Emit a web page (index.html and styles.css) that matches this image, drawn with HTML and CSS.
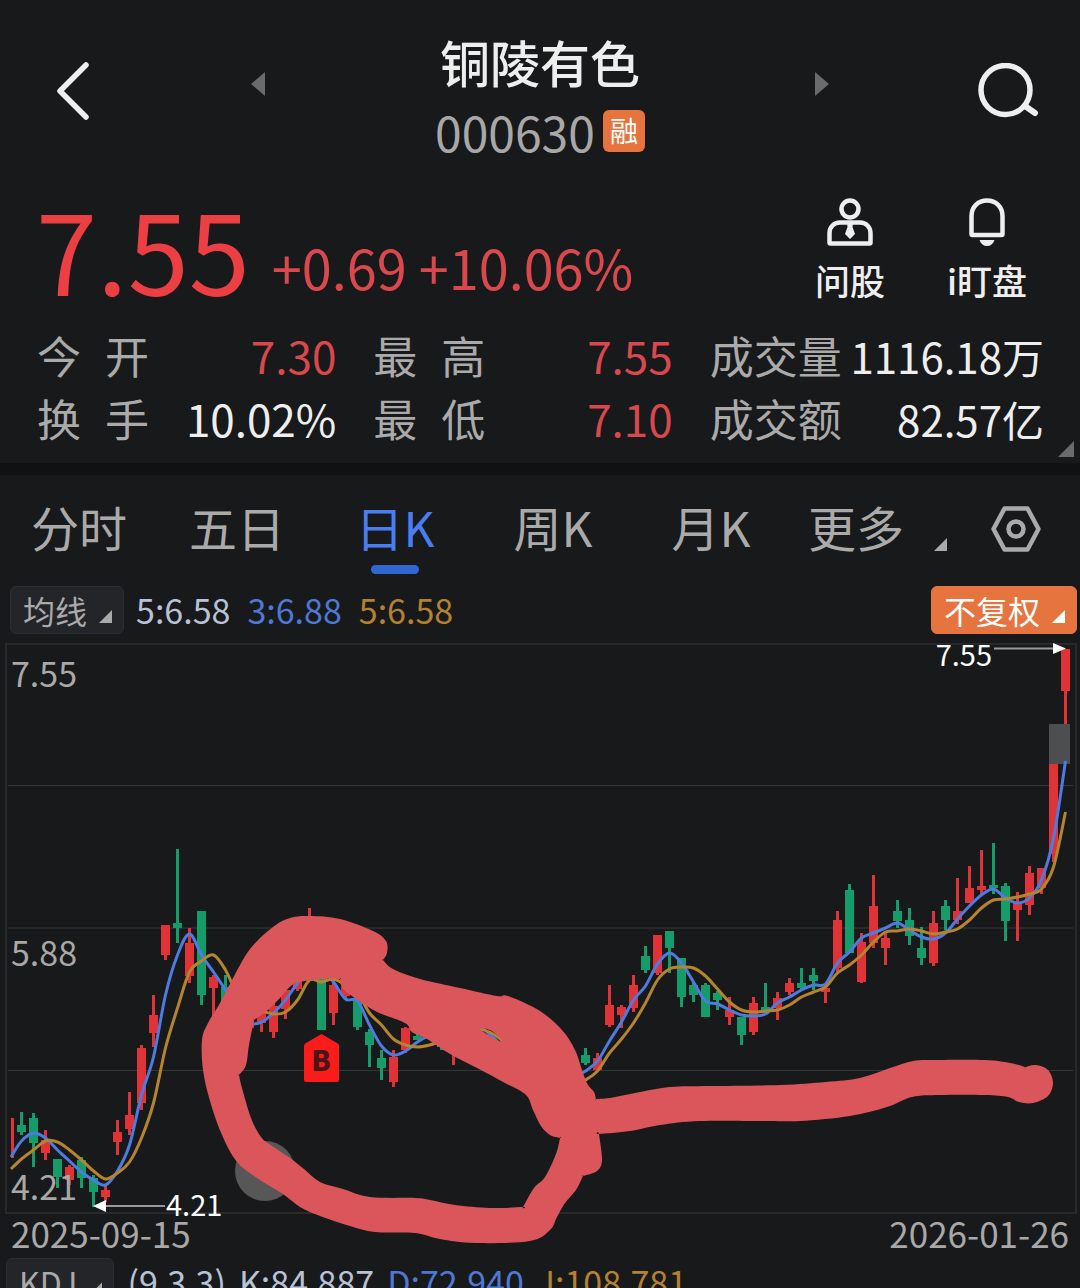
FILE: index.html
```html
<!DOCTYPE html>
<html lang="zh-CN">
<head>
    <meta charset="UTF-8">
    <meta name="viewport" content="width=device-width, initial-scale=1.0">
    <title>铜陵有色 000630</title>
    <link rel="stylesheet" href="styles.css">
</head>
<body>
    <header class="header">
        <button class="icon-btn back-btn" aria-label="返回">
            <svg width="34" height="58" viewBox="0 0 34 58"><path d="M30 3L4 29L30 55" fill="none" stroke="#eee" stroke-width="5.5" stroke-linecap="round" stroke-linejoin="round"/></svg>
        </button>
        <div class="stock-nav">
            <button class="icon-btn arrow-btn" aria-label="上一只">
                <svg width="14" height="24" viewBox="0 0 14 24"><path d="M0 12L14 0V24Z" fill="#6b6b6b"/></svg>
            </button>
            <div class="stock-title">
                <h1>铜陵有色</h1>
                <p class="stock-code">000630<span class="tag">融</span></p>
            </div>
            <button class="icon-btn arrow-btn" aria-label="下一只">
                <svg width="14" height="24" viewBox="0 0 14 24"><path d="M14 12L0 0V24Z" fill="#6b6b6b"/></svg>
            </button>
        </div>
        <button class="icon-btn search-btn" aria-label="搜索">
            <svg width="62" height="56" viewBox="0 0 62 56"><circle cx="27.500" cy="27" r="24.5" fill="none" stroke="#eee" stroke-width="5.5"/><path d="M47 43L57 50" stroke="#eee" stroke-width="6" stroke-linecap="round"/></svg>
        </button>
    </header>

    <main>
        <section class="quote">
            <span class="price">7.55</span>
            <span class="change">+0.69 +10.06%</span>
            <button class="action">
                <svg width="46" height="48" viewBox="0 0 46 48" fill="none" stroke="#eee" stroke-width="4.5">
                    <circle cx="23" cy="11" r="8.5"/>
                    <path d="M2.5 44.500V35C2.500 29 7 24.500 13 24.500H33C39 24.500 43.500 29 43.500 35V44.500Q43.500 45.500 42.500 45.500H3.500Q2.500 45.500 2.500 44.500Z"/>
                    <path d="M20 25H26L25.500 29L28 36L23 41L18 36L20.500 29Z" fill="#eee" stroke="none"/>
                </svg>
                问股
            </button>
            <button class="action">
                <svg width="38" height="48" viewBox="0 0 38 48">
                    <path d="M3.500 36V18C3.500 9 10 2.500 19 2.500S34.500 9 34.500 18V36Q34.500 37 33.500 37H4.500Q3.500 37 3.500 36Z" fill="none" stroke="#eee" stroke-width="4.5"/>
                    <path d="M11.500 42H26.500C25 46 22.500 48 19 48S13 46 11.500 42Z" fill="#eee"/>
                </svg>
                i盯盘
            </button>
        </section>

        <dl class="stats">
            <div class="stat"><dt>今 开</dt><dd class="up">7.30</dd></div>
            <div class="stat"><dt>最 高</dt><dd class="up">7.55</dd></div>
            <div class="stat"><dt class="wide">成交量</dt><dd>1116.18万</dd></div>
            <div class="stat"><dt>换 手</dt><dd>10.02%</dd></div>
            <div class="stat"><dt>最 低</dt><dd class="up">7.10</dd></div>
            <div class="stat"><dt class="wide">成交额</dt><dd>82.57亿</dd></div>
        </dl>

        <nav class="tabs">
            <button class="tab">分时</button>
            <button class="tab">五日</button>
            <button class="tab active">日K</button>
            <button class="tab">周K</button>
            <button class="tab">月K</button>
            <button class="tab more">更多<i class="corner"></i></button>
            <button class="icon-btn settings-btn" aria-label="设置">
                <svg width="50" height="46" viewBox="0 0 50 46" fill="none" stroke="#aaa" stroke-width="4.5" stroke-linejoin="round"><path d="M13.500 2.500H36.500L47.500 23L36.500 43.500H13.500L2.500 23Z"/><circle cx="25" cy="23" r="7.5"/></svg>
            </button>
        </nav>

        <div class="indicator-row">
            <button class="picker">均线<i class="corner"></i></button>
            <span class="val-white">5:6.58</span>
            <span class="val-blue">3:6.88</span>
            <span class="val-gold">5:6.58</span>
            <button class="picker adjust">不复权<i class="corner"></i></button>
        </div>

        <svg class="chart" viewBox="0 640 1080 573">
            <rect x="6" y="644" width="1070" height="569" fill="none" stroke="#28292b" stroke-width="2"/>
            <path d="M8 785.500H1073M8 1070.500H1073" stroke="#353637"/>
            <path d="M8 928H1073" stroke="#28292b" stroke-width="2"/>
            <circle cx="265" cy="1171" r="30" fill="#575757"/>
            <g id="candles"></g>
            <rect x="1049" y="724" width="21" height="40" fill="#4d4e50"/>
            <path id="ma3" class="ma" stroke="#4e7be0"/>
            <path id="ma5" class="ma" stroke="#b5842f"/>

            <g class="axis-label">
                <text x="11" y="687">7.55</text>
                <text x="11" y="966">5.88</text>
                <text x="11" y="1200">4.21</text>
            </g>
            <path d="M994 648.500H1053M106 1206H165" stroke="#999" stroke-width="2"/>
            <path d="M1053 643L1066 648.500L1053 654ZM106 1200L93 1206L106 1212Z" fill="#fff"/>
            <g class="mark-label">
                <text x="992" y="666" text-anchor="end">7.55</text>
                <text x="166" y="1216">4.21</text>
            </g>

            <path d="M304 1046Q304 1044 306 1043L321.500 1034L337 1043Q339 1044 339 1046V1080Q339 1082 337 1082H306Q304 1082 304 1080Z" fill="#fa1b1b"/>
            <text class="buy-mark" x="321" y="1071" text-anchor="middle">B</text>
            <path id="brush" fill="#da565b" fill-rule="evenodd"/>
        </svg>

        <div class="dates"><span>2025-09-15</span><span>2026-01-26</span></div>

        <div class="indicator-row kdj-row">
            <button class="picker">KDJ<i class="corner"></i></button>
            <span class="val-white">(9,3,3)</span>
            <span class="val-white">K:84.887</span>
            <span class="val-blue">D:72.940</span>
            <span class="val-gold">J:108.781</span>
        </div>
    </main>
    <script src="chart.js"></script>
</body>
</html>
```

FILE: styles.css
```css
* {
    box-sizing: border-box;
}

body {
    margin: 0;
    height: 100vh;
    overflow: hidden;
    background-color: #18191b;
    color: #eee;
    font-family: "Noto Sans CJK SC", "Noto Sans", sans-serif;
}

button {
    padding: 0;
    border: none;
    background: none;
    color: inherit;
    font-family: inherit;
    cursor: pointer;
}

svg {
    display: block;
}

h1, p, dl, dd {
    margin: 0;
}

/* header */
.header {
    display: grid;
    grid-template-columns: 23% 54% 23%;
    align-items: center;
    height: 182px;
}

.back-btn {
    justify-self: start;
    margin-left: 56px;
}

.search-btn {
    justify-self: end;
    margin-right: 40px;
}

.stock-nav {
    display: flex;
    justify-content: space-between;
    align-items: center;
    padding: 0 3px;
}

.arrow-btn {
    margin-bottom: 14px;
}

.stock-title {
    display: flex;
    flex-direction: column;
    align-items: center;
    gap: 10px;
    padding-top: 10px;
}

h1 {
    font-size: 50px;
    line-height: 60px;
    font-weight: 500;
}

.stock-code {
    display: flex;
    align-items: center;
    gap: 8px;
    font-size: 48px;
    line-height: 60px;
    color: #a8a8a8;
}

.tag {
    width: 42px;
    height: 42px;
    border-radius: 6px;
    background-color: #e6743e;
    color: #fff;
    font-size: 28px;
    line-height: 40px;
    text-align: center;
}

/* quote */
.quote {
    display: flex;
    align-items: flex-end;
    padding: 10px 47px 0 36px;
}

.price {
    font-size: 110px;
    line-height: 112px;
    color: #eb3f43;
}

.change {
    margin: 0 auto 10px 22px;
    font-size: 54px;
    line-height: 54px;
    color: #d9484c;
}

.action {
    display: flex;
    flex-direction: column;
    align-items: center;
    gap: 14px;
    width: 92px;
    margin: 0 0 4px 45px;
    font-size: 35px;
    line-height: 40px;
    font-weight: 500;
}

.stats {
    position: relative;
    display: grid;
    grid-template-columns: 299fr 299fr 334fr;
    column-gap: 37px;
    padding: 20px 36px 13px 37px;
    border-bottom: 12px solid #101113;
}

.stats::after {
    content: "";
    position: absolute;
    right: 6px;
    bottom: 6px;
    width: 16px;
    height: 16px;
    background-color: #6b6b6b;
    clip-path: polygon(100% 0, 100% 100%, 0 100%);
}

.stat {
    display: flex;
    justify-content: space-between;
    align-items: baseline;
    font-size: 44px;
    line-height: 63px;
    white-space: nowrap;
}

.stat dt {
    width: 112px;
    color: #aaa;
    text-align-last: justify;
}

.stat .wide {
    width: auto;
}

.stat .wide + dd {
    font-size: 42px;
}

.stat .up {
    color: #d9484c;
}

/* period tabs */
.tabs {
    display: grid;
    grid-template-columns: repeat(5, 158fr) 175fr 115fr;
    height: 111px;
    padding-top: 21px;
}

.tab {
    display: flex;
    flex-direction: column;
    align-items: center;
    gap: 9px;
    font-size: 48px;
    line-height: 60px;
    color: #aaa;
}

.tab.active {
    color: #4a7df0;
}

.tab.active::after {
    content: "";
    width: 48px;
    height: 9px;
    border-radius: 5px;
    background-color: #3166d0;
}

.tab.more {
    flex-direction: row;
    align-items: flex-start;
    justify-content: center;
    gap: 30px;
}

.settings-btn {
    justify-self: end;
    align-self: start;
    margin: 10px 39px 0 0;
}

.corner {
    width: 13px;
    height: 13px;
    background-color: currentColor;
    clip-path: polygon(100% 0, 100% 100%, 0 100%);
}

.tab .corner {
    margin-top: 42px;
}

/* indicator values */
.indicator-row {
    display: flex;
    align-items: center;
    gap: 17px;
    padding: 0 3px 0 10px;
    margin-bottom: 6px;
    font-size: 34px;
    line-height: 48px;
    white-space: nowrap;
}

.picker {
    display: flex;
    align-items: flex-end;
    gap: 12px;
    height: 48px;
    padding: 0 11px 0 12px;
    margin-right: -5px;
    border: 1px solid #2c2d30;
    border-radius: 6px;
    background-color: #242529;
    color: #aaa;
    font-size: 32px;
    line-height: 46px;
}

.picker .corner {
    margin-bottom: 10px;
}

.adjust {
    margin: 0 0 0 auto;
    border-color: #e6743e;
    background-color: #e6743e;
    color: #fff;
}

.val-white {
    color: #b8c2d6;
}

.val-blue {
    color: #4e78d4;
}

.val-gold {
    color: #b5812f;
}

/* chart */
.chart {
    position: relative;
    width: 100%;
    overflow: visible;
}

.ma {
    fill: none;
    stroke-width: 3;
    stroke-linejoin: round;
}

.axis-label {
    fill: #a8a8a8;
    font-size: 34px;
}

.mark-label {
    fill: #fff;
    font-size: 29px;
}

.buy-mark {
    fill: #4a1519;
    font-size: 28px;
    font-weight: 900;
}

.dates {
    display: flex;
    justify-content: space-between;
    padding: 0 11px;
    font-size: 35px;
    line-height: 40px;
    color: #a8a8a8;
}

.kdj-row {
    gap: 13px;
    margin-top: 5px;
    padding-left: 6px;
}

.kdj-row .picker {
    margin-right: 0;
}
```

FILE: chart.js
```js
const UP = '#df3338';
const DOWN = '#169c6a';
const STEP = 12;
const FIRST_X = 9.5;

// index: [direction, high, body top, body bottom, low]
const candles = {
    1: ['d', 1112, 1125, 1132, 1135], 2: ['d', 1113, 1118, 1143, 1167],
    3: ['u', 1130, 1140, 1153, 1160], 4: ['d', 1159, 1159, 1177, 1188],
    5: ['u', 1165, 1167, 1180, 1185], 6: ['d', 1157, 1160, 1178, 1188],
    7: ['d', 1175, 1178, 1192, 1207], 8: ['u', 1185, 1190, 1197, 1202],
    9: ['u', 1120, 1132, 1142, 1155], 10: ['u', 1092, 1115, 1129, 1135],
    11: ['u', 1045, 1048, 1103, 1110], 12: ['u', 995, 1015, 1033, 1047],
    13: ['u', 925, 925, 955, 960], 14: ['d', 849, 923, 928, 943],
    15: ['u', 928, 943, 976, 983], 16: ['d', 911, 911, 995, 1005],
    17: ['u', 975, 977, 988, 1017], 18: ['d', 975, 987, 1002, 1010],
    20: ['u', 1010, 1012, 1028, 1031], 21: ['u', 1005, 1012, 1023, 1032],
    22: ['u', 1003, 1006, 1032, 1038], 23: ['u', 985, 990, 1009, 1019],
    24: ['u', 975, 978, 989, 991], 25: ['u', 908, 940, 970, 975],
    26: ['d', 978, 978, 1030, 1030], 27: ['u', 980, 985, 1013, 1025],
    28: ['u', 980, 987, 996, 999], 29: ['d', 995, 998, 1027, 1030],
    30: ['d', 1029, 1032, 1045, 1067], 31: ['d', 1050, 1058, 1068, 1080],
    32: ['u', 1050, 1057, 1082, 1087], 33: ['u', 1027, 1028, 1050, 1053],
    34: ['d', 1030, 1036, 1040, 1040], 36: ['d', 1035, 1043, 1047, 1050],
    37: ['u', 1030, 1035, 1045, 1065],
    48: ['d', 1048, 1055, 1063, 1065], 49: ['u', 1053, 1058, 1070, 1070],
    50: ['u', 985, 1005, 1025, 1027], 51: ['u', 1005, 1007, 1015, 1028],
    52: ['u', 975, 985, 1008, 1012], 53: ['d', 946, 956, 970, 973],
    54: ['u', 935, 935, 973, 975], 55: ['d', 931, 931, 948, 973],
    56: ['d', 958, 958, 997, 1007], 57: ['d', 983, 985, 995, 1002],
    58: ['d', 983, 985, 1017, 1017], 59: ['d', 991, 993, 1000, 1010],
    60: ['u', 997, 1010, 1017, 1025], 61: ['d', 1017, 1017, 1035, 1045],
    62: ['u', 997, 1003, 1032, 1035], 63: ['d', 983, 1007, 1010, 1013],
    64: ['u', 992, 998, 1008, 1020], 65: ['u', 978, 983, 992, 995],
    66: ['d', 968, 983, 988, 991], 67: ['d', 968, 975, 981, 990],
    68: ['u', 987, 988, 992, 1003], 69: ['u', 911, 920, 968, 972],
    70: ['d', 884, 890, 953, 953], 71: ['u', 933, 942, 982, 983],
    72: ['u', 875, 906, 943, 948], 73: ['u', 933, 938, 948, 965],
    74: ['d', 900, 911, 921, 928], 75: ['d', 908, 920, 936, 945],
    76: ['d', 927, 948, 958, 965], 77: ['u', 911, 923, 963, 966],
    78: ['d', 900, 906, 920, 930], 79: ['u', 878, 911, 920, 924],
    80: ['u', 866, 888, 903, 903], 81: ['u', 850, 886, 890, 895],
    82: ['d', 843, 885, 888, 894], 83: ['d', 883, 886, 921, 941],
    84: ['u', 892, 902, 910, 941], 85: ['u', 866, 873, 905, 915],
    86: ['u', 868, 868, 888, 894], 87: ['u', 764, 764, 854, 862],
    88: ['u', 649, 649, 691, 724]
};

// moving averages, one y per candle
const ma3 = [
    1157, 1141, 1133, 1138, 1150, 1161, 1172, 1180, 1185, 1171, 1145, 1095, 1057, 995, 955, 934,
    955, 972, 990, 1010, 1023, 1022, 1013, 1000, 983, 970, 968, 982, 999, 1001, 1025, 1046,
    1055, 1051, 1042, 1035, 1028, 1024, 1022, 1025, 1034, 1046, 1060, 1075, 1085, 1088, 1083, 1078,
    1071, 1061, 1041, 1022, 1000, 986, 964, 953, 963, 982, 1001, 1004, 1010, 1015, 1016, 1014,
    1003, 997, 990, 985, 984, 963, 952, 938, 933, 928, 923, 930, 937, 939, 933, 919,
    906, 895, 889, 898, 903, 898, 880, 838, 761
];
const ma5 = [
    1169, 1159, 1150, 1141, 1142, 1150, 1160, 1171, 1179, 1173, 1162, 1138, 1103, 1048, 1008, 972,
    961, 955, 970, 995, 1008, 1011, 1014, 1012, 1000, 980, 982, 979, 985, 993, 1013, 1025,
    1039, 1045, 1047, 1045, 1041, 1036, 1031, 1029, 1032, 1040, 1052, 1066, 1078, 1088, 1090, 1086,
    1080, 1071, 1053, 1039, 1023, 1003, 980, 969, 967, 968, 976, 989, 1002, 1010, 1012, 1011,
    1010, 1005, 997, 992, 987, 973, 965, 955, 942, 932, 931, 929, 931, 934, 932, 929,
    920, 908, 900, 899, 897, 894, 889, 867, 812
];

// a point given twice makes a sharp corner
const brushOuter = [
    [309, 916], [340, 919], [373, 931], [386, 941], [387, 953], [383, 960], [383, 960], [393, 969], [420, 979],
    [460, 988], [497, 996], [508, 996], [540, 1011], [562, 1030], [575, 1050], [583, 1073], [588, 1085],
    [594, 1092], [596, 1099], [596, 1099], [610, 1098], [635, 1093], [670, 1087], [710, 1086], [780, 1085], [826, 1082], [860, 1078],
    [890, 1068], [913, 1061], [935, 1060], [985, 1060], [1010, 1063], [1025, 1067], [1025, 1067], [1036, 1065],
    [1048, 1070], [1053, 1083], [1048, 1096], [1033, 1103], [1019, 1102], [1008, 1097], [985, 1095],
    [940, 1095], [912, 1097], [887, 1107], [850, 1116], [800, 1121], [765, 1121], [700, 1121],
    [660, 1125], [630, 1131], [599, 1134], [599, 1134], [602, 1160], [597, 1171], [583, 1176], [583, 1176], [576, 1190], [565, 1203],
    [557, 1217], [550, 1230], [530, 1241], [475, 1243], [440, 1239], [415, 1233], [375, 1232],
    [350, 1226], [320, 1216], [300, 1207], [283, 1194], [260, 1180], [237, 1162], [222, 1135],
    [210, 1101], [203, 1070], [202, 1040], [208, 1023], [220, 1003], [232, 980], [250, 949],
    [273, 927], [290, 918]
];
const brushInner = [
    [340, 979], [340, 979], [343, 989], [358, 1000], [377, 1012], [405, 1023], [412, 1032], [427, 1039],
    [450, 1054], [477, 1068], [505, 1083], [526, 1095], [533, 1110], [541, 1126], [550, 1135], [560, 1138],
    [560, 1138], [556, 1154], [545, 1177], [534, 1188], [523, 1207], [523, 1207], [490, 1208], [455, 1205], [430, 1200],
    [415, 1198], [370, 1197], [343, 1189], [320, 1182], [304, 1169], [290, 1158], [272, 1146],
    [261, 1137], [251, 1118], [242, 1088], [239, 1075], [239, 1075], [246, 1065], [249, 1045], [254, 1020],
    [254, 1020], [268, 1010], [280, 998], [292, 985], [305, 981], [325, 979]
];
const brushGap = [[479, 1028], [490, 1030], [498, 1036], [502, 1042], [490, 1036]];

// Catmull-Rom spline as a cubic bezier path
function smooth(points, closed) {
    const n = points.length;
    const at = i => closed ? points[(i + n) % n] : points[Math.max(0, Math.min(n - 1, i))];
    let d = 'M' + points[0];
    for (let i = 0; i < (closed ? n : n - 1); i++) {
        const [a, b, c, e] = [at(i - 1), at(i), at(i + 1), at(i + 2)];
        d += `C${b[0] + (c[0] - a[0]) / 6},${b[1] + (c[1] - a[1]) / 6} `
            + `${c[0] - (e[0] - b[0]) / 6},${c[1] - (e[1] - b[1]) / 6} ${c}`;
    }
    return closed ? d + 'Z' : d;
}

function rect(x, y, width, height, fill) {
    return `<rect x="${x}" y="${y}" width="${width}" height="${height}" fill="${fill}"/>`;
}

// the first candle is cut off by the left edge
let bars = rect(11, 1118, 3, 40, UP);
for (const [i, [dir, high, top, bottom, low]] of Object.entries(candles)) {
    const x = FIRST_X + i * STEP;
    const color = dir === 'u' ? UP : DOWN;
    bars += rect(x - 1.5, high, 3, low - high, color) + rect(x - 4.5, top, 9, bottom - top, color);
}
document.getElementById('candles').innerHTML = bars;

const line = ys => smooth(ys.map((y, i) => [Math.max(11, FIRST_X + i * STEP), y]));
document.getElementById('ma3').setAttribute('d', line(ma3));
document.getElementById('ma5').setAttribute('d', line(ma5));
document.getElementById('brush').setAttribute('d',
    smooth(brushOuter, true) + smooth(brushInner, true) + smooth(brushGap, true));
```
